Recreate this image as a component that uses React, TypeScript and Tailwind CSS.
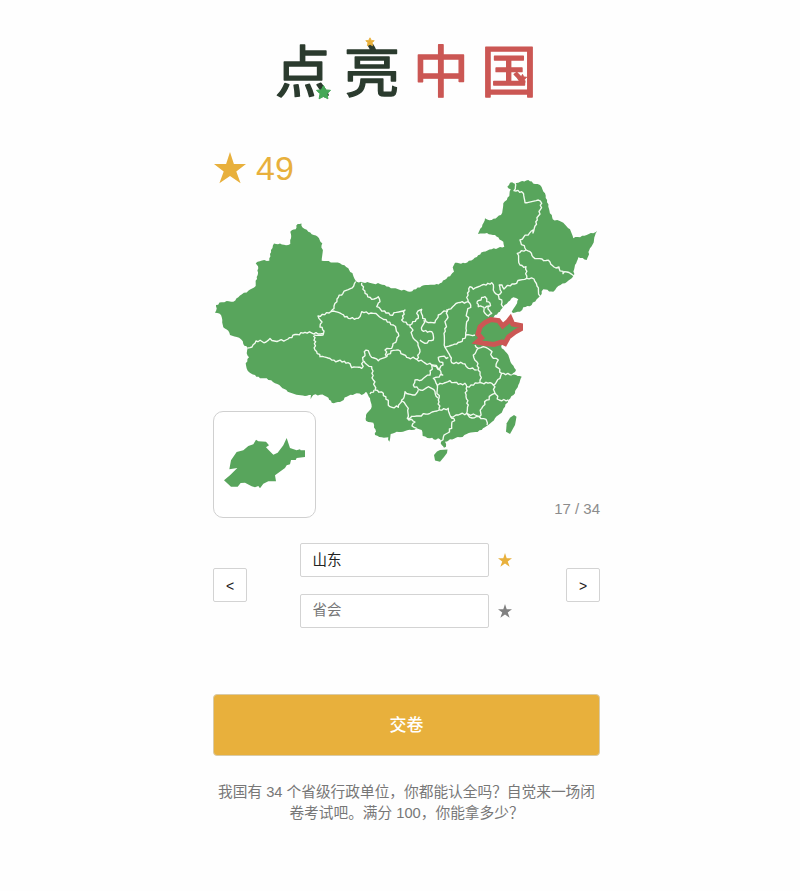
import React from "react";

type Pt = [number, number];

const parse = (s: string): Pt[] =>
  s.trim().split(/\s+/).map((p) => p.split(",").map(Number) as Pt);

// Subdivides a line and offsets the inner points a little, for a natural border.
function rough(s: string, amount: number, closed = false): string {
  const pts = parse(s);
  if (closed) pts.push(pts[0]);
  const out: string[] = [pts[0].join(",")];
  for (let i = 1; i < pts.length; i++) {
    const [ax, ay] = pts[i - 1];
    const [bx, by] = pts[i];
    const len = Math.hypot(bx - ax, by - ay);
    const n = Math.max(1, Math.round(len / 2.2));
    for (let k = 1; k < n; k++) {
      const h = Math.sin(ax * 12.9 + ay * 78.2 + k * 37.7) * 43758.5;
      const o = (h - Math.floor(h) - 0.5) * 2 * amount;
      const t = k / n;
      out.push(
        `${(ax + (bx - ax) * t - ((by - ay) / len) * o).toFixed(1)},${(ay + (by - ay) * t + ((bx - ax) / len) * o).toFixed(1)}`
      );
    }
    out.push(`${bx},${by}`);
  }
  return out.join(" ");
}

const MAINLAND = `301.5,223.5 297.7,224 295.7,229.3 290.3,231.7 291,238.3 290.3,244 286,245.3 280,243.5 274,243.5 271,250 269.3,258.3 269.3,260.7 264.3,260 255.7,263.3 258.3,268.3 257.7,275 255.7,283 255.7,286 248.3,290.7 238.3,297.3 233.3,301.7 226.7,301 221.7,302.3 216,305 216.7,308.3 215,312.7 221,315 222.3,320 223.3,327.3 228.3,330.7 230,335 241,339.3 243.3,344 247.7,348 246.7,353.3 249,357.3 245.7,363.3 247.7,370.7 255,375 260,378.3 266.7,378.3 275,383.3 281,386.7 287.7,391.7 294.3,394 305,396 311,395 310.7,399.3 313.3,395 320,394.7 326.7,396.7 331.7,402.7 340,402 346.7,396.7 356.7,393.3 361.7,395 366,391.7 370,398.3 371.7,406.7 366,415 366,420.7 373.3,422.7 376,431.7 375,435 381.7,437.3 388.3,437.3 389.3,441.7 390.7,434 396.7,431.7 405,431 411.7,430 416.7,428.3 421.7,430 422.7,436 430,438.3 440,439.3 441.7,445 444,447.7 446,446.7 445,441.7 450,439.3 460,437.3 466.7,434 481.7,430 486.7,426 495,418.3 501.7,412.7 505,406.7 508.3,400 515,393.3 518.3,385 521.7,376.7 516,375 511.7,375 516,370 511.7,364 508.3,355 501.7,348.3 501.7,345 506.7,342 508.3,338 515,333 520,328 520,323.3 512.3,322.7 510,318 505,324.3 501.7,322 493.3,317.7 495,315 500,311.7 503,307 508.3,301.7 513.3,297.3 518.3,299.3 516,305 511.7,311.7 513,313 520,311.7 523.3,307.3 531.7,305 536.7,299.3 540,296 543.3,289.3 553.3,291.7 558.3,286 565,283.3 573.3,276 575,265 578.3,257.3 586.7,260 590,248.3 594,240 597.3,231 586.7,235 573.3,238.3 570,229.3 563.3,222.7 552.7,219.3 548.3,206.7 545,193.3 540,185 535,184 528.3,180 518.3,182.7 510,182.7 507.3,186.7 510.7,189.3 509.3,196 503.3,203.3 501,215 491.7,220 485,218.3 482,227 478,234 487,233 495,235 503.3,241.7 504.3,246.7 491.7,249.3 483.3,251.7 473.3,259.3 465,263.3 455,262.7 452.7,267.3 454,271.7 446.7,278.5 440,283.3 436.7,284 421.7,286 410,291.7 393.3,288.3 380,284 356.7,281.7 355.7,280.7 353,275 348.3,268.3 340,263.3 321.7,260.7 322.3,243.3 317.7,236.7 308.3,231.7 302.3,227.3`;

const HAINAN = "434,455 437,451.5 440,450 447.5,449.5 447,453 444,457 440,461.7 435,460.5";
const TAIWAN = "514,415 516.5,416.7 515,425 510,434 506,431.7 506.7,423.3 510,417.7";

const BORDERS = [
  "247.7,348 252,347 256,341 266,342 270,338.5 277,341.5 288,339 295,334.5 305,332.3 318,334 323,333.5",
  "355.7,281.5 353.7,286 343,293.3 337,299 334,306 331,311.5 318,316 322,322 320,327 324,331 323,335 314,335",
  "313.3,336 315.7,341.7 315,350 320,356.7 331.7,360 348.3,362.7 351.7,367.7 361.7,368.3 363.3,361.7 364.3,351.7 368.3,350.7 371.7,357.3 378.3,360.7 386.7,356.7 385,350 391.7,348.3 396.7,340 398.3,333.3 393.3,325 381.7,318.3 373.3,313.3 361.7,311.7 358.3,318.3 348.3,318.3 341.7,314 331,311.7",
  "361.7,282.7 365,293.3 371.7,299.3 378.3,296.7 380,301.7 376.7,306.7 390,315 405,310 401.7,320 410,325 418.3,318.3 416.7,313.3 421.7,309.3 422.7,318.3 428.3,322.7 435,322.7 438.3,315 448.3,309.3 458.3,302.7 468.3,301.7 467.5,293 470,286.7 473.3,289.3 482,285 491.7,282.7 493.3,290 498.3,295 501.5,292 499.3,285 502,285 504,289 512,284 526.7,278.3 526,266.7 520,265 517.3,253.3 526,250 520,240 533,230 533,233 535,226 537.3,220 541.7,203.3 538.3,200 525,202.7 521.7,191.7 514,190.7 515,182.7",
  "526,250 530,251.7 533,257 542,259 550,262 556,268 559,267 563,273.7 567,272 574,276",
  "526.7,278.3 534,279 537,286 540,296",
  "498.3,295 502,302 503,307",
  "476.7,302.7 481.7,297.3 485,296.7 486.7,301.7 490,303.3 488,309 491.7,313.3 488.3,316 485,313.3 484,307.3 478.3,306.7 476.7,302.7",
  "485,308 489,306",
  "468.3,301.7 470.7,305 466.7,313.3 468.3,320 466,328.3 465.7,335 475,335",
  "446.7,309.3 447.3,315 444,333.3 445,347.3 456.7,344 465,338.3 465.7,335",
  "445,347.3 450,356 451.7,362.7 465,364 468.3,368.3 476.7,370",
  "475,345 478.3,348.3 473.3,355 476.7,361.7 478,370 480,375 480,382.7",
  "478.3,348.3 483.3,346.7 490,350 493.3,358.3 498.3,360 496,366.7 501.7,373.3 511.7,375",
  "480,382.7 490,382.7 493.3,385 500,378.3 501.7,373.3",
  "480,382.7 466.7,386.7 466,396.7 468.3,405 466.7,413.3 479.3,416.7 481.7,408.3 486.7,400 495,393.3 493.3,385",
  "495,393.3 499.3,400 508.3,400",
  "479.3,416.7 486,419.3 487,425",
  "439.3,410 448.3,408.3 450.7,416.7 458.3,415 466.7,413.3 472,418 479.3,416.7",
  "454,418.3 451.7,428.3 443.3,437.3 441,441",
  "450.7,416.7 454,418.3",
  "437,385 440,383.3 450,380.7 458.3,384.3 465,383.3 466.7,386.7",
  "437.3,385 438.3,400 439.3,410",
  "437.3,385 433.3,378.3 442.7,375 440,370 431.7,365 430,375 421.7,380 415,380 413.3,385 420,390 428.3,386.7 435,391.7 438,398",
  "386.7,356.7 391,351 398.3,350 406.7,357.3 416.7,359.3 431.7,365",
  "431.7,365 440,368.3 443,365 438.3,357.3 448.3,357.3",
  "416.7,359.3 420,351.7 418,343 413.3,338.3 411.7,328.3 410,325",
  "424,320 421.7,330 431.7,331.7 433.3,340 425,343.3 420,340",
  "364,361 371.7,366.7 373.3,380 375,390 383.3,393.3 390,406.7 398.3,407.3 401.7,400 405,391.7 415,395 418.3,390",
  "402,401 408.3,408.3 407.3,418.3 416.7,416 430,413.3 439.3,410",
  "407.3,418.3 415,422 412,426 416.7,428.3",
  "370,394 374,390",
].map((b) => rough(b, 1.3));

const SHANDONG =
  "57,240 75,225 97,203 73,207 78,180 95,155 115,150 130,137 145,132 153,118 160,123 183,124 192,135 183,141 190,148 205,163 218,157 235,135 245,113 255,143 275,150 285,147 287,150 300,150 300,170 275,173 272,179 258,179 255,192 245,195 240,203 210,225 213,243 190,243 175,250 165,264 160,257 150,261 140,258 120,247 107,248 98,259 78,259";

const SHANDONG_ON_MAP =
  "477,342 481.5,338 478,334 480,327 485,322.5 491,319.5 498.5,320.5 502.7,326 507.5,322 510.3,318.5 512.7,324 520.5,325.5 520.5,329 515,332 508.5,337 505,343.5 502,342 494,344.5 484,343.2";

const COAST = rough(MAINLAND, 0.8, true);

function Star({ className }: { className: string }) {
  return (
    <svg viewBox="0 0 32 32" className={className} fill="currentColor" aria-hidden="true">
      <path d="M16 0 19.9 12H32L22.3 19.4 26.6 31.3 16 24 5.4 31.3 9.7 19.4 0 12H12.1Z" />
    </svg>
  );
}

// The wordmark: rounded characters with small stars scattered on them.
function Logo() {
  const star = "M0-7 2.2-2.6 7-2.2 3.5 1.3 4.4 6.3 0 4 -4.4 6.3 -3.5 1.3 -7-2.2 -2.2-2.6Z";
  return (
    <svg
      viewBox="268 10 276 110"
      className="h-[110px] w-[276px] shrink-0 font-['Noto_Sans_CJK_SC',sans-serif] text-[56px] font-normal"
      strokeLinejoin="round"
      strokeWidth="1.4"
    >
      <g fill="#2b3b2e" stroke="#2b3b2e">
        <text x="274" y="92">点</text>
        <text x="343" y="92">亮</text>
      </g>
      <g fill="#cb5754" stroke="#cb5754">
        <text x="412" y="92">中</text>
        <text x="480" y="92">国</text>
      </g>
      <path d={star} transform="translate(322.5 92.5)" fill="#45a857" stroke="#45a857" strokeWidth="1" />
      <path d={star} transform="translate(369 42) scale(.6)" fill="#e8b03c" stroke="#e8b03c" />
      <path d={star} transform="translate(521.5 78.5) scale(.6)" fill="#cb5754" stroke="#cb5754" />
    </svg>
  );
}

function ChinaMap() {
  return (
    <svg viewBox="213 138 387 380" className="col-start-1 row-start-1 h-[380px] w-[387px]" fill="#58a55c">
      <polygon points={COAST} />
      <polygon points={HAINAN} />
      <polygon points={TAIWAN} />
      <g fill="none" stroke="#f2fbf0" strokeWidth="1.35" strokeLinejoin="round">
        {BORDERS.map((points, i) => (
          <polyline key={i} points={points} />
        ))}
      </g>
      <polygon points={SHANDONG_ON_MAP} stroke="#cb5754" strokeWidth="5" />
    </svg>
  );
}

function Answer({ value, placeholder, done }: { value?: string; placeholder?: string; done?: boolean }) {
  return (
    <div className="flex items-center">
      <input
        defaultValue={value}
        placeholder={placeholder}
        className="h-[34px] w-[189px] rounded-xs border border-[#d3d3d3] bg-white px-3 pb-[3px] text-[14.5px] text-[#222] outline-none placeholder:text-[#777]"
      />
      <Star className={done ? "ml-[9px] size-[14px] text-[#e8b03c]" : "ml-[9px] size-[14px] text-[#808080]"} />
    </div>
  );
}

function StepButton({ label }: { label: string }) {
  return (
    <button className="mb-[2px] flex size-[34px] items-center justify-center rounded-xs border border-[#d3d3d3] bg-white pt-[3px] text-[14px] text-[#222]">
      {label}
    </button>
  );
}

export default function App() {
  return (
    <main className="min-h-[891px] bg-[#fefefe] pl-[213px] font-['Liberation_Sans','Noto_Sans_CJK_SC',sans-serif]">
      <div className="flex w-[387px] flex-col">
        <header className="flex h-[138px] justify-center pt-[10px]">
          <Logo />
        </header>

        <section className="grid">
          <ChinaMap />
          <div className="col-start-1 row-start-1 flex items-center gap-[10px] self-start pt-[10px] pl-px text-[#e8b03c]">
            <Star className="size-[32px]" />
            <span className="text-[34px] leading-[40px]">49</span>
          </div>
          <div className="col-start-1 row-start-1 h-[107px] w-[103px] self-end rounded-[10px] border border-[#d0d0d0] bg-white">
            <svg viewBox="27 35 303 315" className="h-[105px] w-[101px]" fill="#58a55c">
              <polygon points={SHANDONG} />
            </svg>
          </div>
          <span className="col-start-1 row-start-1 self-end justify-self-end text-[15px] leading-[18px] text-[#8c8c8c]">
            17 / 34
          </span>
        </section>

        <section className="mt-[25px] flex items-center justify-between">
          <StepButton label="<" />
          <div className="mr-[2px] flex flex-col gap-[17px]">
            <Answer value="山东" done />
            <Answer placeholder="省会" />
          </div>
          <StepButton label=">" />
        </section>

        <button className="mt-[66px] h-[62px] rounded-[4px] border border-[#d9cba8] bg-[#e8b03c] pt-[2px] text-[17px] font-medium text-white">
          交卷
        </button>

        <p className="mt-[26px] text-center text-[14.7px] leading-[21px] whitespace-nowrap text-[#777]">
          我国有 34 个省级行政单位，你都能认全吗？自觉来一场闭
          <br />
          卷考试吧。满分 100，你能拿多少？
        </p>
      </div>
    </main>
  );
}
